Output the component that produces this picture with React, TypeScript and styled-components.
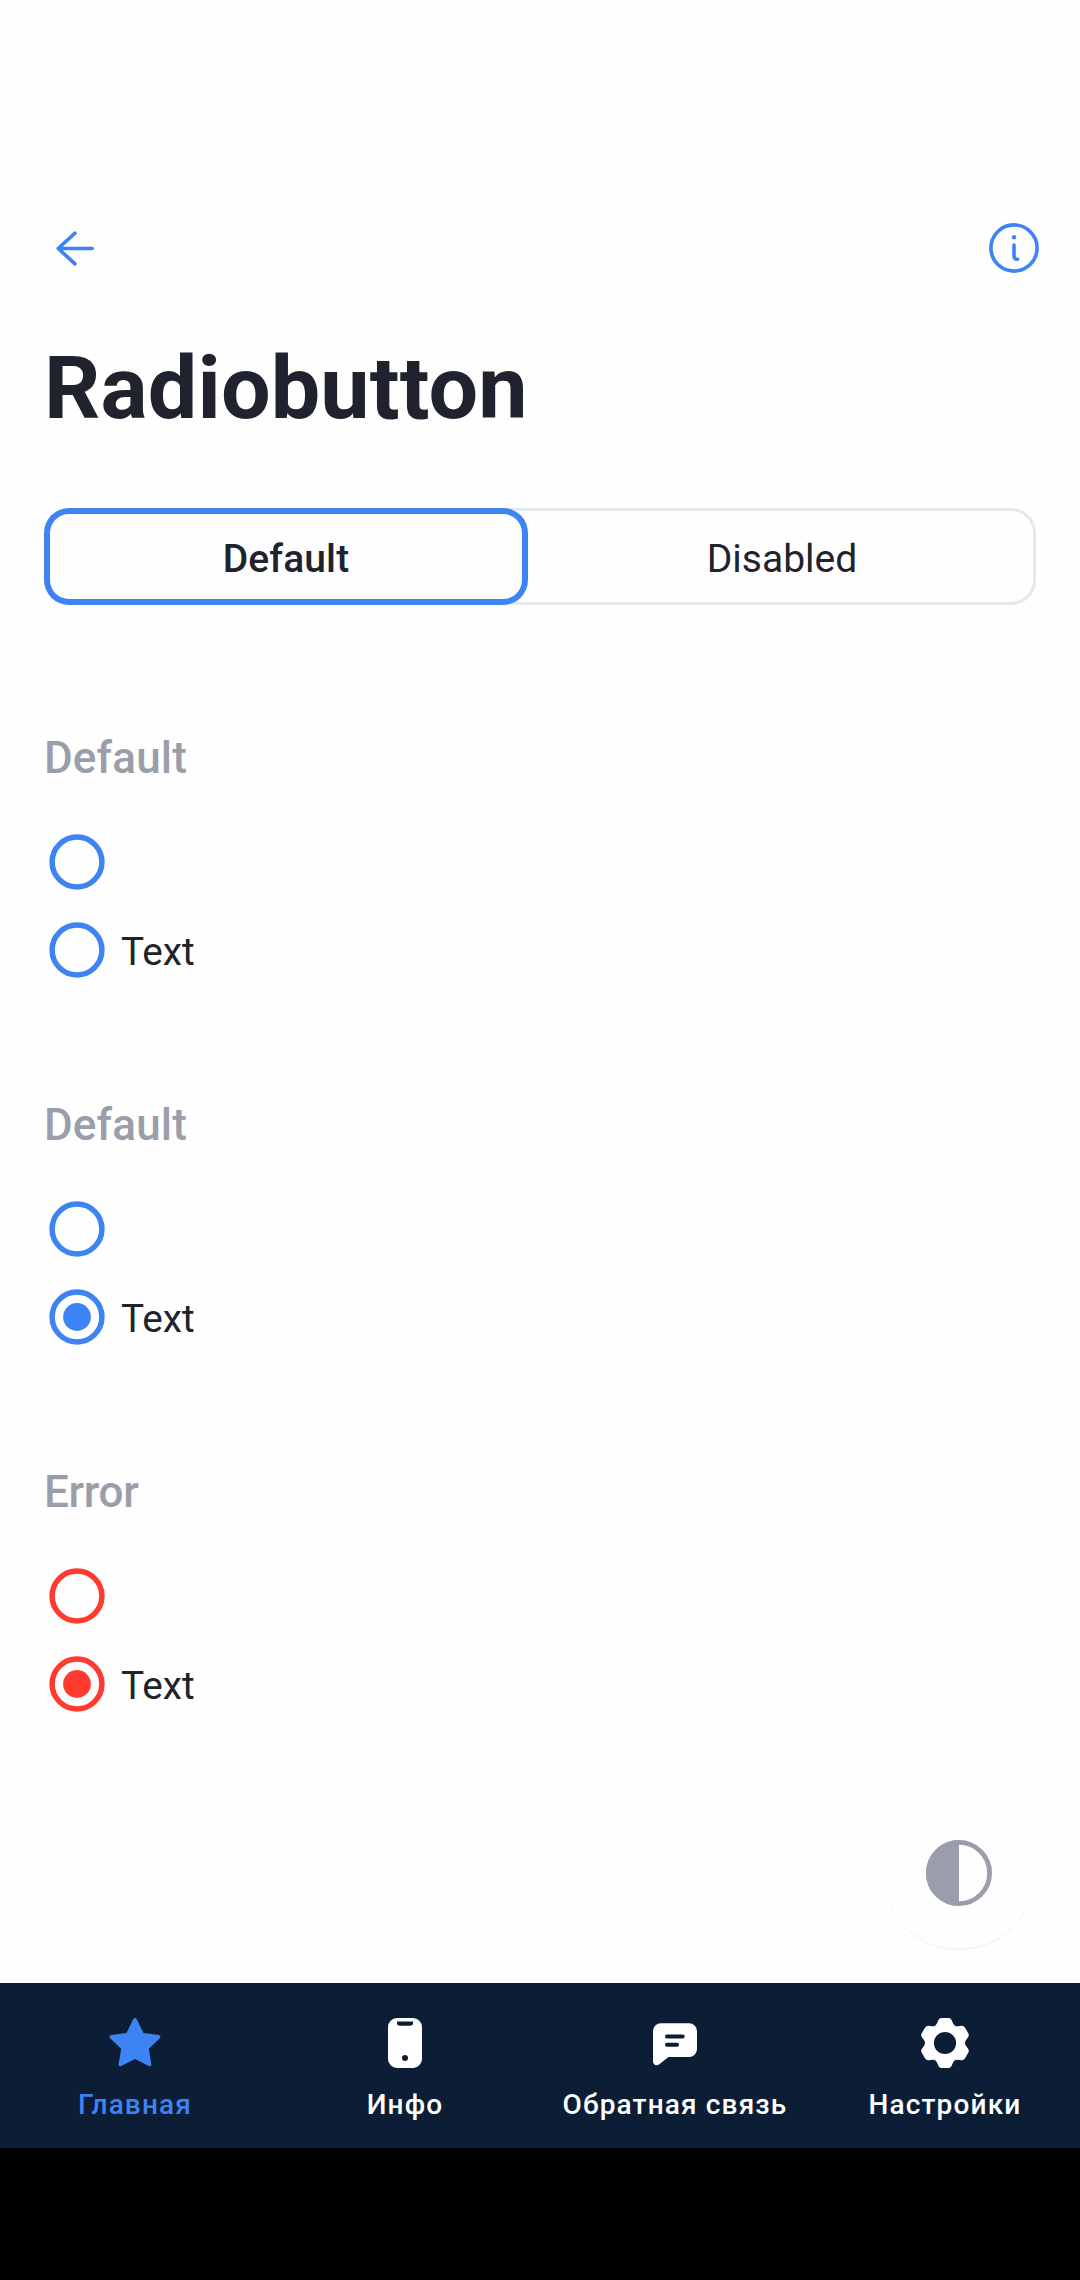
import React from "react";
import styled, { createGlobalStyle } from "styled-components";

const BLUE = "#3d83f3";
const RED = "#ff3b30";
const INK = "#20232d";
const MUTED = "#9a9eaa";

const GlobalStyle = createGlobalStyle`
  *, *::before, *::after { box-sizing: border-box; }
  body {
    margin: 0;
    background: #000;
    font-family: Roboto, "Liberation Sans", sans-serif;
  }
  button { font: inherit; border: 0; background: none; padding: 0; margin: 0; }
`;

const Phone = styled.div`
  display: flex;
  flex-direction: column;
  width: 1080px;
  height: 2280px;
  background: #000;
  overflow: hidden;
`;

const Screen = styled.main`
  position: relative;
  height: 1983px;
  padding: 215px 44px 0;
  background: #fefefe;
  color: ${INK};
`;

const Header = styled.header`
  display: flex;
  justify-content: space-between;
  height: 66px;
  margin-right: -11px;
`;

const IconButton = styled.button`
  display: block;
  width: 66px;
  height: 66px;
  color: ${BLUE};
`;

const Icon = styled.svg`
  display: block;
  width: 66px;
  height: 66px;
`;

const Title = styled.h1`
  margin: 55px 0 68px;
  font-size: 88px;
  line-height: 104px;
  font-weight: 700;
  letter-spacing: 0.15px;
`;

const Segmented = styled.div`
  display: flex;
  height: 97px;
  border-radius: 25px;
  box-shadow: inset 0 0 0 3px #e3e7ee;
`;

const Segment = styled.button<{ $active?: boolean }>`
  flex: ${(p) => (p.$active ? "0 0 484px" : "1")};
  padding-top: 4px;
  border-radius: 25px;
  box-shadow: ${(p) => (p.$active ? `inset 0 0 0 6px ${BLUE}` : "none")};
  background: ${(p) => (p.$active ? "#fefefe" : "transparent")};
  color: ${INK};
  font-size: 39px;
  font-weight: ${(p) => (p.$active ? 500 : 400)};
  letter-spacing: ${(p) => (p.$active ? "0.1px" : "0")};
`;

const Groups = styled.div`
  display: flex;
  flex-direction: column;
  gap: 116px;
  margin-top: 127px;
`;

const Group = styled.section`
  display: flex;
  flex-direction: column;
  gap: 22px;
`;

const GroupTitle = styled.h2<{ $tracking: number }>`
  margin: 0 0 23px;
  color: ${MUTED};
  font-size: 44px;
  line-height: 52px;
  font-weight: 500;
  letter-spacing: ${(p) => p.$tracking}px;
`;

const RadioRow = styled.label`
  display: flex;
  align-items: center;
  gap: 11px;
  height: 66px;
`;

const RadioText = styled.span`
  padding-top: 4px;
  font-size: 38.75px;
  line-height: 46px;
`;

const Fab = styled.button`
  position: absolute;
  right: 45px;
  bottom: 34px;
  display: grid;
  place-items: center;
  width: 152px;
  height: 152px;
  border-radius: 50%;
  background: #fefefe;
  box-shadow: 0 1px 1px rgba(0, 0, 0, 0.06);
`;

const Contrast = styled.svg`
  width: 66px;
  height: 66px;
`;

const TabBar = styled.nav`
  display: grid;
  grid-template-columns: repeat(4, 1fr);
  height: 165px;
  padding-top: 27px;
  background: #0c1d36;
`;

const Tab = styled.button<{ $active?: boolean }>`
  display: flex;
  flex-direction: column;
  align-items: center;
  gap: 12px;
  color: ${(p) => (p.$active ? BLUE : "#fff")};
  font-size: 28px;
  line-height: 33px;
  font-weight: 500;
  letter-spacing: 1.15px;
  white-space: nowrap;
`;

function Radio({ color, checked, text }: { color: string; checked?: boolean; text?: string }) {
  return (
    <RadioRow>
      <Icon viewBox="0 0 66 66" fill="none">
        <circle cx="33" cy="33" r="24.9" stroke={color} strokeWidth="5.5" />
        {checked && <circle cx="33" cy="33" r="13.9" fill={color} />}
      </Icon>
      {text && <RadioText>{text}</RadioText>}
    </RadioRow>
  );
}

const StarIcon = () => (
  <Icon viewBox="0 0 66 66" fill="currentColor">
    <path d="M31.2 9.3Q33 6.8 34.8 9.3L41.5 22.9L56.8 25Q59.6 26 57.6 28.5L46.8 38.7L49.4 54.4Q49.2 57 46.8 56.1L33 49L19.2 56.1Q16.8 57 16.6 54.4L19.2 38.7L8.4 28.5Q6.4 26 9.2 25L24.5 22.9Z" />
  </Icon>
);

const PhoneIcon = () => (
  <Icon viewBox="0 0 66 66" fill="currentColor" fillRule="evenodd">
    <path d="M25 8H41A9 9 0 0 1 50 17V49A9 9 0 0 1 41 58H25A9 9 0 0 1 16 49V17A9 9 0 0 1 25 8ZM25 11.4V13A2.7 2.7 0 0 0 27.7 15.7H38.3A2.7 2.7 0 0 0 41 13V11.4ZM33 45A3 3 0 1 0 33 51A3 3 0 1 0 33 45Z" />
  </Icon>
);

const MessageIcon = () => (
  <Icon viewBox="0 0 66 66">
    <path
      fill="currentColor"
      d="M19 13.2H47A8 8 0 0 1 55 21.2V39A8 8 0 0 1 47 47H26.5L17 54.4C14.5 56.2 11 54.7 11 51.5V21.2A8 8 0 0 1 19 13.2Z"
    />
    <path d="M25 26.4H40.7M25 34.7H35" stroke="#0c1d36" strokeWidth="4" strokeLinecap="round" />
  </Icon>
);

const TOOTH =
  "M0 0L-10 -17.3Q-8.4 -18.2 -7.5 -20.8Q-6.2 -25 -3.5 -25H3.5Q6.2 -25 7.5 -20.8Q8.4 -18.2 10 -17.3Z";

const GearIcon = () => (
  <Icon viewBox="-33 -33 66 66" fill="currentColor">
    <circle r="18" />
    {[0, 60, 120, 180, 240, 300].map((angle) => (
      <path key={angle} d={TOOTH} transform={`rotate(${angle})`} />
    ))}
    <circle r="11.1" fill="#0c1d36" />
  </Icon>
);

const groups = [
  { title: "Default", color: BLUE, checked: false, tracking: 0.15 },
  { title: "Default", color: BLUE, checked: true, tracking: 0.15 },
  { title: "Error", color: RED, checked: true, tracking: -0.3 },
];

const tabs = [
  { label: "Главная", icon: <StarIcon />, active: true },
  { label: "Инфо", icon: <PhoneIcon /> },
  { label: "Обратная связь", icon: <MessageIcon /> },
  { label: "Настройки", icon: <GearIcon /> },
];

export default function App() {
  return (
    <Phone>
      <GlobalStyle />
      <Screen>
        <Header>
          <IconButton>
            <Icon viewBox="0 0 66 66" fill="none" stroke="currentColor" strokeWidth="3.6" strokeLinecap="round" strokeLinejoin="round">
              <path d="M31 18.2L14.2 33.5L31 48.8M14.2 33.5H48.2" />
            </Icon>
          </IconButton>
          <IconButton>
            <Icon viewBox="0 0 66 66" fill="none" stroke="currentColor" strokeWidth="3.6" strokeLinecap="round">
              <circle cx="33" cy="33" r="23.1" />
              <circle cx="33" cy="22.2" r="2.2" fill="currentColor" stroke="none" />
              <path d="M33 30V41Q33 44.3 36.6 44.3" />
            </Icon>
          </IconButton>
        </Header>
        <Title>Radiobutton</Title>
        <Segmented>
          <Segment $active>Default</Segment>
          <Segment>Disabled</Segment>
        </Segmented>
        <Groups>
          {groups.map((g, i) => (
            <Group key={i}>
              <GroupTitle $tracking={g.tracking}>{g.title}</GroupTitle>
              <Radio color={g.color} />
              <Radio color={g.color} checked={g.checked} text="Text" />
            </Group>
          ))}
        </Groups>
        <Fab>
          <Contrast viewBox="0 0 66 66">
            <circle cx="33" cy="33" r="30.6" fill="none" stroke={MUTED} strokeWidth="4.8" />
            <path d="M33 0A33 33 0 0 0 33 66Z" fill={MUTED} />
          </Contrast>
        </Fab>
      </Screen>
      <TabBar>
        {tabs.map((t) => (
          <Tab key={t.label} $active={t.active}>
            {t.icon}
            <span>{t.label}</span>
          </Tab>
        ))}
      </TabBar>
    </Phone>
  );
}
